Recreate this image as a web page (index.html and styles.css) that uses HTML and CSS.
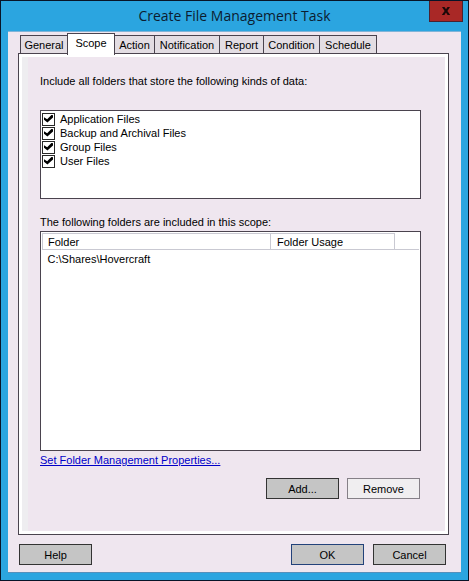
FILE: index.html
```html
<!DOCTYPE html>
<html lang="en">
<head>
<meta charset="utf-8">
<meta name="viewport" content="width=device-width, initial-scale=1">
<title>Create File Management Task</title>
<link rel="stylesheet" href="styles.css">
</head>
<body>
<main class="window">
  <header class="titlebar">
    <h1 class="title">Create File Management Task</h1>
    <button class="close" type="button" aria-label="Close">
      <svg width="10" height="8" viewBox="0 0 10 8" aria-hidden="true"><path d="M1 0h2.5L5 2.3 6.5 0H9L6.4 3.9 9.2 8H6.6L5 5.6 3.4 8H.8L3.6 3.9z"/></svg>
    </button>
  </header>
  <div class="client">
    <div class="tabs" role="tablist">
      <button class="tab" type="button" role="tab">General</button>
      <button class="tab tab-active" type="button" role="tab" aria-selected="true">Scope</button>
      <button class="tab" type="button" role="tab">Action</button>
      <button class="tab" type="button" role="tab">Notification</button>
      <button class="tab" type="button" role="tab">Report</button>
      <button class="tab" type="button" role="tab">Condition</button>
      <button class="tab" type="button" role="tab">Schedule</button>
    </div>
    <section class="panel" role="tabpanel">
      <p class="caption">Include all folders that store the following kinds of data:</p>
      <div class="kinds">
        <label class="kind"><input class="check" type="checkbox" checked>Application Files</label>
        <label class="kind"><input class="check" type="checkbox" checked>Backup and Archival Files</label>
        <label class="kind"><input class="check" type="checkbox" checked>Group Files</label>
        <label class="kind"><input class="check" type="checkbox" checked>User Files</label>
      </div>
      <p class="caption caption-folders">The following folders are included in this scope:</p>
      <div class="folders">
        <table class="grid">
          <thead><tr><th class="col-folder">Folder</th><th class="col-usage">Folder Usage</th><td class="col-rest"></td></tr></thead>
          <tbody><tr><td>C:\Shares\Hovercraft</td><td></td><td></td></tr></tbody>
        </table>
      </div>
      <a class="link" href="#properties">Set Folder Management Properties...</a>
      <div class="actions">
        <button class="button" type="button">Add...</button>
        <button class="button button-muted" type="button">Remove</button>
      </div>
    </section>
    <footer class="footer">
      <button class="button button-help" type="button">Help</button>
      <button class="button button-default" type="button">OK</button>
      <button class="button" type="button">Cancel</button>
    </footer>
  </div>
</main>
</body>
</html>
```
FILE: styles.css
```css
* { box-sizing: border-box; }

body {
  margin: 0;
  font: 11px/14px "Liberation Sans", Arial, sans-serif;
  color: #000;
}

button { font: inherit; color: inherit; }

.window {
  display: flex;
  flex-direction: column;
  min-height: 100vh;
  padding: 0 7px 7px;
  border: 1px solid #081428;
  background: #2ba5e0;
}

.titlebar {
  position: relative;
  display: flex;
  align-items: center;
  justify-content: center;
  height: 30px;
}

.title {
  margin: 0;
  font: 14px/20px "Open Sans", "Noto Sans", sans-serif;
  color: #0b1c30;
}

.close {
  position: absolute;
  top: 0;
  right: 0;
  display: flex;
  align-items: center;
  justify-content: center;
  width: 34px;
  height: 21px;
  margin-right: -2px;
  padding: 0;
  border: 1px solid #4a2230;
  border-top: 0;
  background: #a92826;
  fill: #1c0808;
}

.client {
  flex: 1;
  display: flex;
  flex-direction: column;
  padding: 1px 12px 7px 10px;
  border-top: 1px solid #7fb4d8;
  border-bottom: 1px solid #5590bc;
  background: #efe6ef;
}

.tabs {
  display: grid;
  grid-template-columns: 47px 47px 40px 65px 44px 56px 57px;
  align-items: end;
  height: 20px;
  padding-left: 2px;
}

.tab {
  height: 18px;
  margin-right: -1px;
  padding: 0;
  border: 1px solid #4a434e;
  border-bottom: 0;
  background: #e3dde3;
  white-space: nowrap;
}

.tab-active {
  z-index: 1;
  height: 22px;
  margin-bottom: -2px;
  padding-bottom: 3px;
  background: #fff;
}

.panel {
  flex: 1;
  display: flex;
  flex-direction: column;
  padding: 17px 24px 35px 18px;
  border: 1px solid #4a434e;
  box-shadow: inset 0 0 0 3px #fff, inset 9px 0 0 #eeedf0;
}

.caption { margin: 0 0 22px; padding-top: 3px; }

.kinds {
  height: 89px;
  padding: 1px;
  margin-left: 3px;
  margin-right: 3px;
  border: 1px solid #4a434e;
  background: #fff;
}

.caption, .link { margin-left: 3px; }
.caption-folders { margin-top: 13px; margin-bottom: 2px; }

.kind {
  display: flex;
  align-items: center;
  gap: 5px;
  height: 14px;
}

.check {
  appearance: none;
  width: 13px;
  height: 13px;
  margin: 0;
  border: 1px solid #292929;
  background: #fff;
}

.check:checked::before {
  content: "";
  display: block;
  width: 9px;
  height: 8px;
  margin: 1px;
  background: #000;
  clip-path: polygon(0 33%, 35% 60%, 88% 0, 100% 12%, 100% 38%, 38% 100%, 0 65%);
}

.folders {
  flex: 1;
  padding: 1px;
  margin: 0 3px 2px;
  border: 1px solid #4a434e;
  background: #fff;
}

.grid {
  width: 100%;
  border-collapse: collapse;
  table-layout: fixed;
}

.grid th, .grid td {
  height: 18px;
  padding: 0 6px;
  text-align: left;
  font-weight: normal;
}

.grid thead th, .grid thead td {
  height: 16px;
  border-bottom: 1px solid #c9c9d2;
}

.grid thead th { border: 1px solid #c9c9d2; }

.grid thead th:first-child { padding-left: 5px; }

.grid tbody td:first-child { padding-left: 5px; }

.col-folder { width: 228px; }
.col-usage { width: 124px; }

.link {
  align-self: flex-start;
  color: #0000c8;
}

.actions {
  display: flex;
  justify-content: flex-end;
  gap: 8px;
  margin-top: 11px;
  margin-right: 4px;
}

.button {
  width: 73px;
  height: 21px;
  padding: 0;
  border: 1px solid #333;
  background: #c5c5c5;
}

.button-muted { border-color: #858087; background: #f0eef0; }
.button-default { border-color: #23427a; }

.footer {
  display: flex;
  gap: 9px;
  padding: 9px 3px 0 1px;
}

.button-help { margin-right: auto; }
```
